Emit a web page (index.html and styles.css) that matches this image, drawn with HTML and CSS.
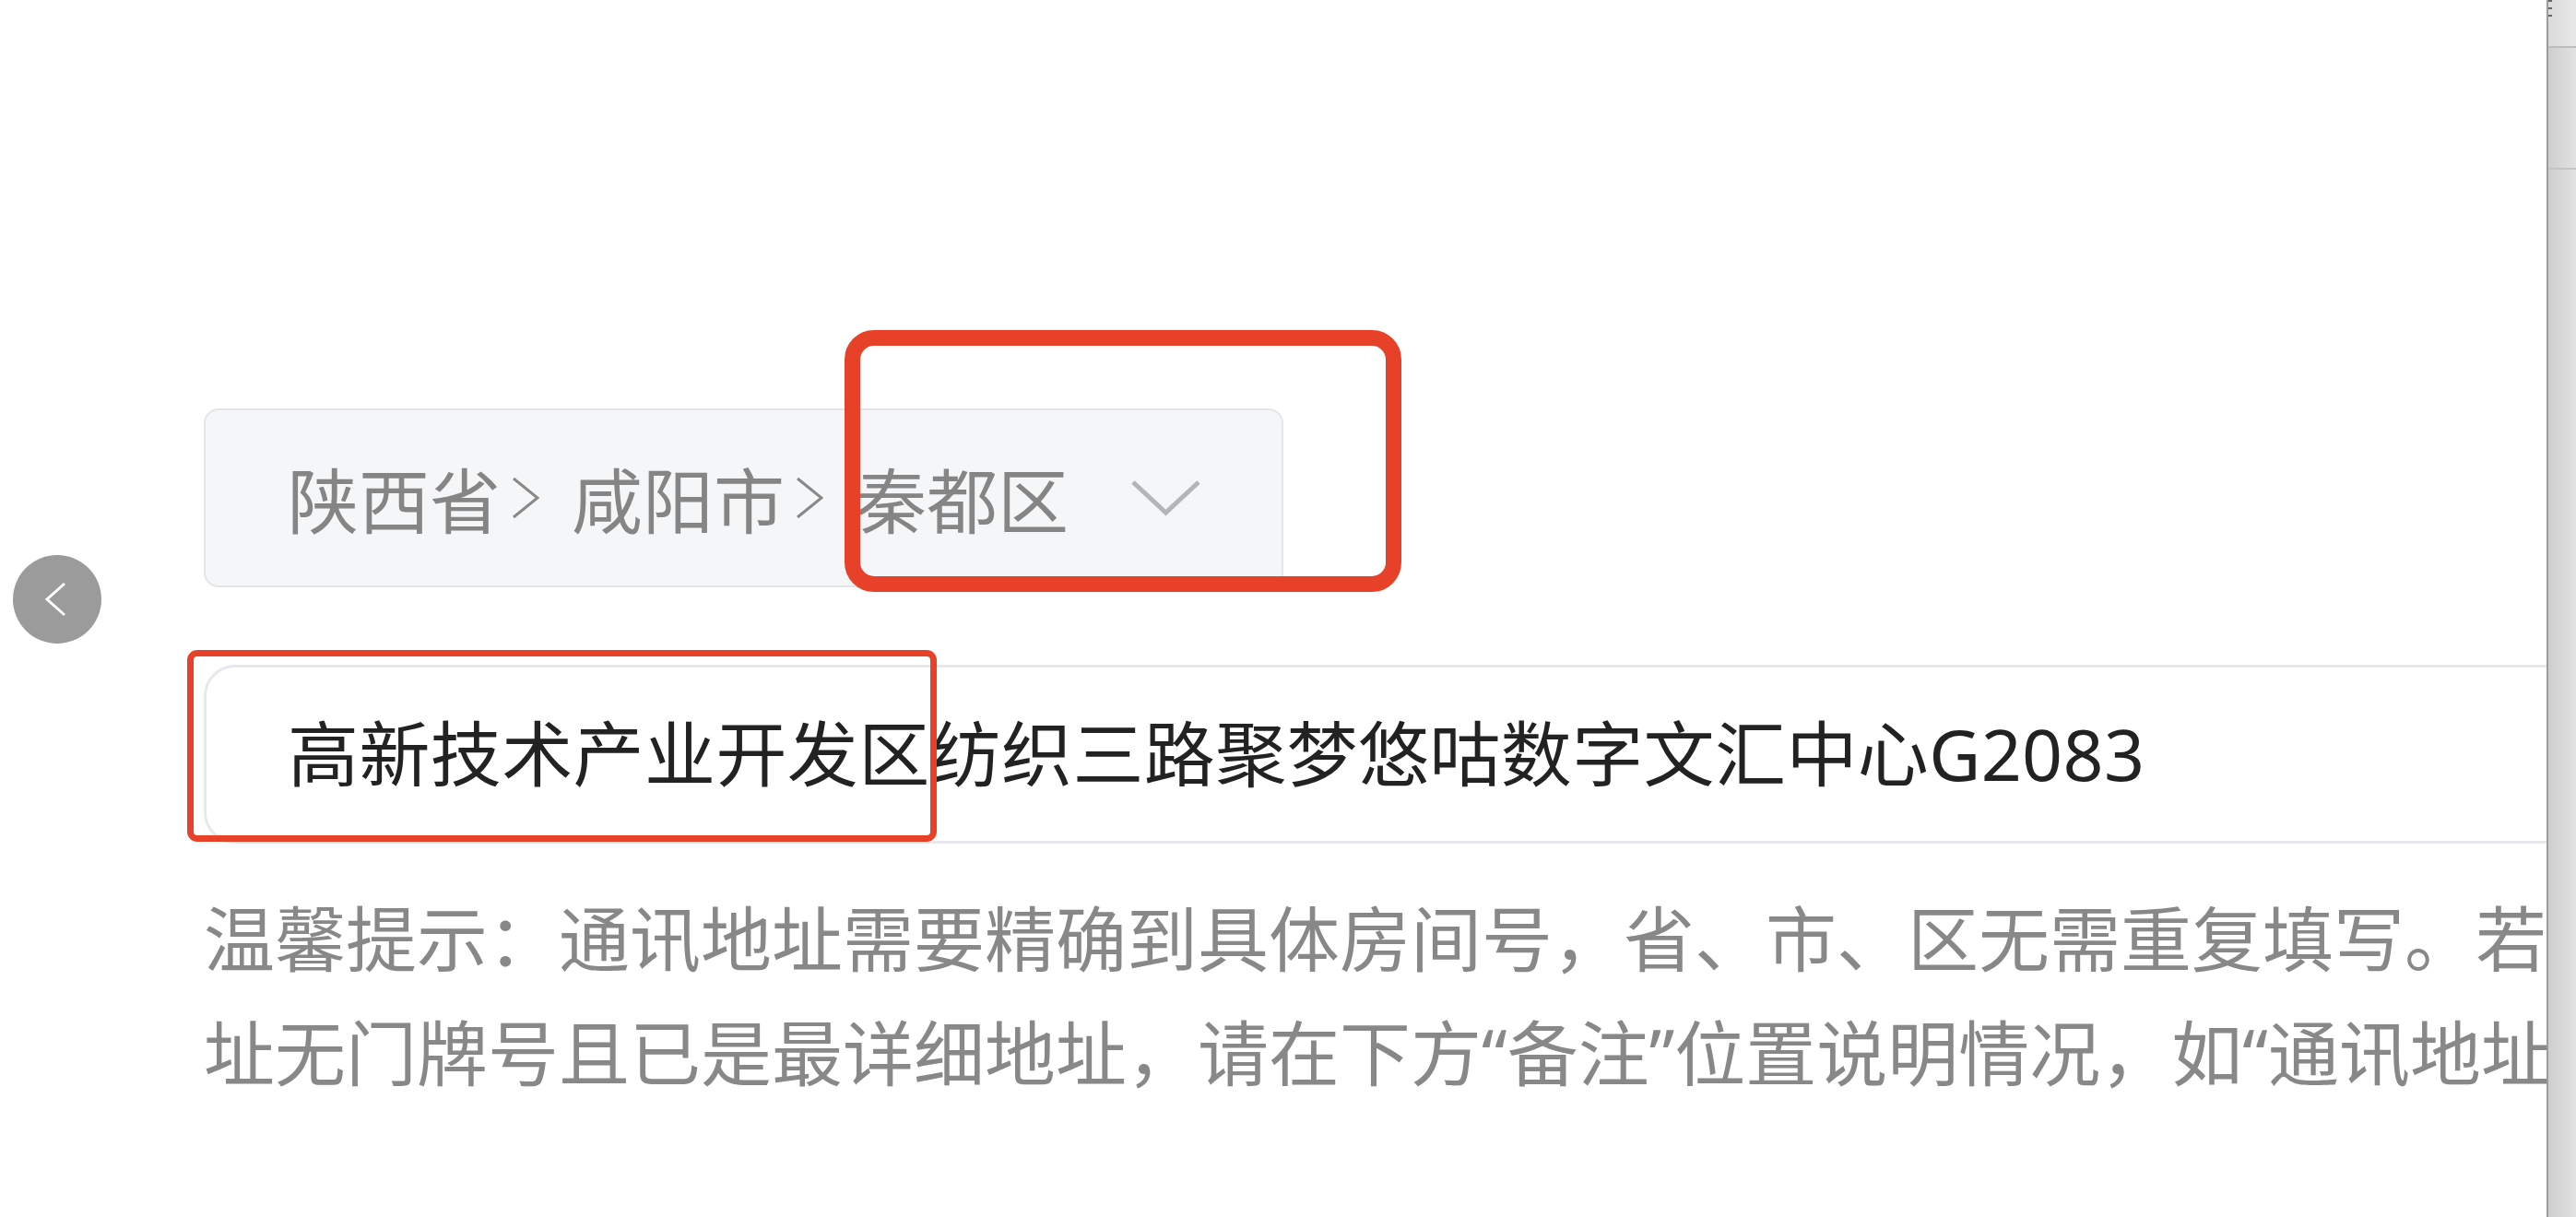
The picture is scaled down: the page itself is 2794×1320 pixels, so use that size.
FILE: index.html
```html
<!DOCTYPE html>
<html lang="zh-CN">
<head>
  <meta charset="UTF-8" />
  <meta name="viewport" content="width=device-width, initial-scale=1.0"/>
  <title>通讯地址</title>
  <link rel="stylesheet" href="styles.css">
</head>
<body>
  <button class="back" aria-label="返回">
    <svg viewBox="0 0 96 96" width="96" height="96"><polyline points="56,31 37,48 56,65" /></svg>
  </button>

  <div class="form">
    <div class="region">
      <span>陕西省</span>
      <span class="sep"><svg viewBox="0 0 30 46"><polyline points="2,2 28,23 2,44" /></svg></span>
      <span>咸阳市</span>
      <span class="sep"><svg viewBox="0 0 30 46"><polyline points="2,2 28,23 2,44" /></svg></span>
      <span>秦都区</span>
      <svg class="arrow" viewBox="0 0 77 40"><polyline points="3,3 38.5,36 74,3" /></svg>
    </div>

    <input class="address" type="text" value="高新技术产业开发区纺织三路聚梦悠咕数字文汇中心G2083" readonly />

    <p class="hint">温馨提示：通讯地址需要精确到具体房间号，省、市、区无需重复填写。若通讯地址无门牌号且已是最详细地址，请在下方“备注”位置说明情况，如“通讯地址不详”</p>
  </div>

  <!-- annotation boxes -->
  <div class="mark mark-region"></div>
  <div class="mark mark-address"></div>

  <div class="side">
    <div class="side-top"><i></i><i></i><i></i></div>
    <div class="side-band"></div>
  </div>
</body>
</html>
```

FILE: styles.css
```css
html, body {
  margin: 0;
  padding: 0;
  overflow: hidden;
  height: 100%;
}

body {
  background: #fff;
  font-family: "Noto Sans", "Noto Sans CJK SC", sans-serif;
  position: relative;
}

.form {
  width: 2800px;
  padding: 443px 0 0 221px;
}

.region {
  width: 1171px;
  height: 194px;
  box-sizing: border-box;
  display: flex;
  align-items: center;
  padding: 0 87px 0 89px;
  background: #f5f6f8;
  border: 2px solid #e4e5e8;
  border-radius: 16px;
  font-size: 77px;
  color: #858585;
  white-space: nowrap;
}

.sep {
  display: inline-flex;
  align-items: center;
  width: 1em;
  height: 1em;
  flex: none;
}

.sep svg {
  width: 30px;
  height: 46px;
  margin-left: 12px;
  fill: none;
  stroke: #888;
  stroke-width: 3;
}

.arrow {
  width: 77px;
  height: 40px;
  margin-left: auto;
  fill: none;
  stroke: #b4b5b8;
  stroke-width: 5;
}

.address {
  display: block;
  width: 2800px;
  height: 194px;
  box-sizing: border-box;
  margin: 84px 0 0;
  padding: 0 0 8px 88px;
  border: 3px solid #e7e8eb;
  border-radius: 34px;
  background: #fff;
  font: 77px "Noto Sans", "Noto Sans CJK SC", sans-serif;
  letter-spacing: 0.4px;
  color: #222;
  outline: none;
}

.hint {
  margin: 42px 0 0;
  font-size: 77px;
  line-height: 124px;
  color: #888;
}

.back {
  position: absolute;
  left: 14px;
  top: 602px;
  width: 96px;
  height: 96px;
  padding: 0;
  border: none;
  border-radius: 50%;
  background: #9b9b9b;
}

.back svg {
  display: block;
  fill: none;
  stroke: #fff;
  stroke-width: 3;
}

.mark {
  position: absolute;
  box-sizing: border-box;
  border-style: solid;
  border-color: #e8412a;
  pointer-events: none;
}

.mark-region {
  left: 916px;
  top: 358px;
  width: 604px;
  height: 284px;
  border-width: 17px;
  border-radius: 32px;
}

.mark-address {
  left: 203px;
  top: 705px;
  width: 813px;
  height: 208px;
  border-width: 7px;
  border-radius: 11px;
}

.side {
  position: fixed;
  top: 0;
  right: 0;
  width: 30px;
  height: 100%;
  border-left: 2px solid #9c9c9c;
  background: linear-gradient(90deg, #cecece, #e2e2e2);
}

.side-top {
  height: 50px;
  border-bottom: 2px solid #bdbdbd;
  background: linear-gradient(90deg, #dadada, #e8e8e8);
}

.side-top i {
  display: block;
  width: 4px;
  height: 2px;
  margin-bottom: 6px;
  background: #666;
}

.side-band {
  height: 130px;
  border-bottom: 2px solid #c4c4c4;
}
```
